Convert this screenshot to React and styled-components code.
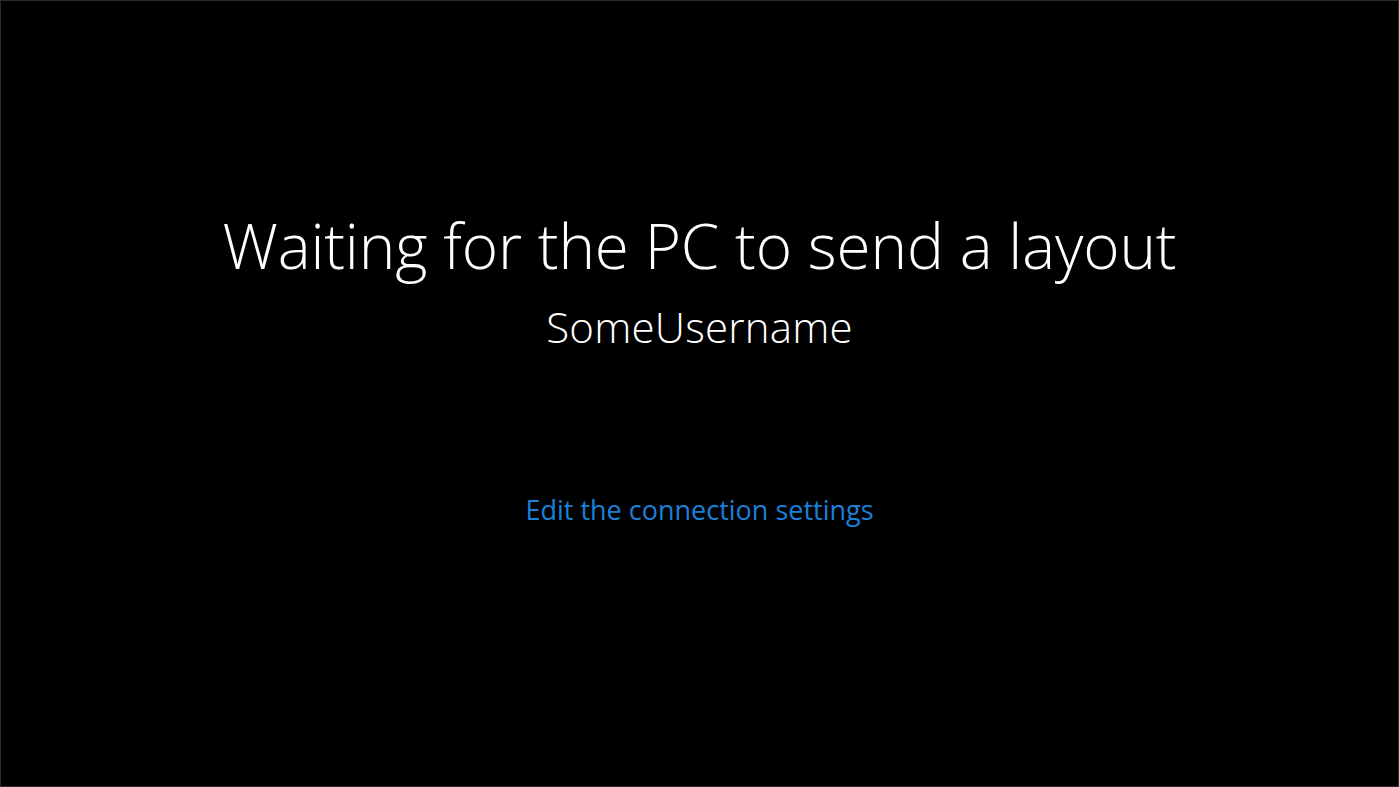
import React from "react";
import styled, { createGlobalStyle } from "styled-components";

const GlobalStyle = createGlobalStyle`
  html, body {
    margin: 0;
    padding: 0;
    background: #000;
  }
`;

const Screen = styled.div`
  box-sizing: border-box;
  width: 1399px;
  height: 787px;
  background: #000;
  border: 1px solid #2b2b2b;
  display: flex;
  flex-direction: column;
  align-items: center;
  padding-top: 204px;
  font-family: "Open Sans", "Liberation Sans", sans-serif;
  color: #fff;
`;

const Title = styled.h1`
  margin: 0;
  font-size: 62px;
  font-weight: 300;
  line-height: 80px;
  letter-spacing: -0.15px;
`;

const Username = styled.div`
  margin-top: 17px;
  font-size: 42px;
  font-weight: 300;
  line-height: 50px;
  letter-spacing: 0.2px;
`;

const EditLink = styled.a`
  margin-top: 141px;
  font-size: 27px;
  line-height: 34px;
  color: #1a80d8;
  text-decoration: none;
  cursor: pointer;
`;

export default function App() {
  return (
    <>
      <GlobalStyle />
      <Screen>
        <Title>Waiting for the PC to send a layout</Title>
        <Username>SomeUsername</Username>
        <EditLink>Edit the connection settings</EditLink>
      </Screen>
    </>
  );
}
